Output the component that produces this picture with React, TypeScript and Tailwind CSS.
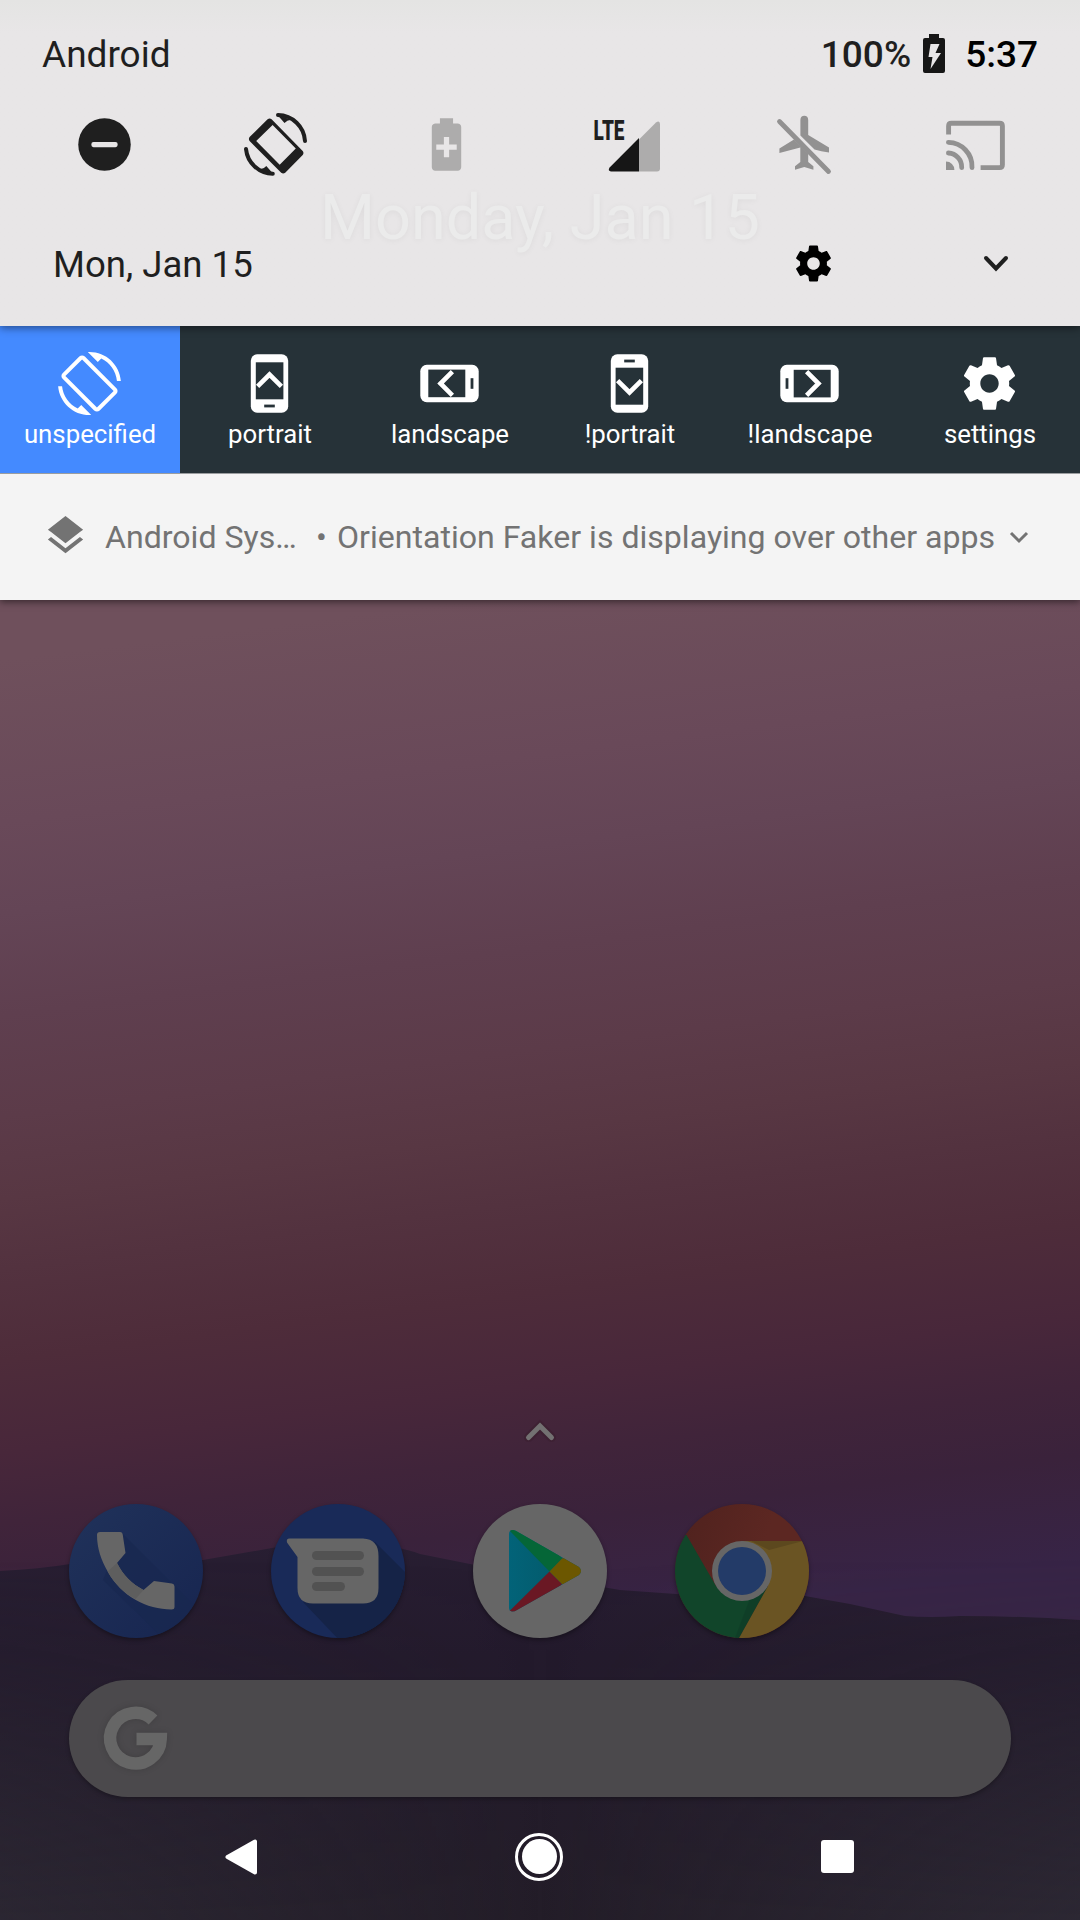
import React from "react";

type IconProps = { className?: string };

function DndIcon({ className }: IconProps) {
  return (
    <svg viewBox="0 0 24 24" className={className} fill="#1f1f1f">
      <circle cx="12" cy="12" r="10" />
      <rect x="7" y="11" width="10" height="2" rx="0.8" fill="#e7e5e6" />
    </svg>
  );
}

function AutoRotateIcon({ className }: IconProps) {
  return (
    <svg viewBox="0 0 63 63" className={className}>
      <path
        fillRule="evenodd"
        d="M4.600 23.200 L22.800 5 Q25.200 3 27.600 5 L60.300 37.700 Q62 39.800 60.300 42 L41.500 60.300 Q39.500 62 37.400 60.300 L4.600 27.600 Q2.800 25.400 4.600 23.200 Z M11 28.600 L36 53.800 L53 36.600 L28.200 11.500 Z"
        fill="#1f1f1f"
        fillOpacity="0"
      />
      <path
        fillRule="evenodd"
        d="M5.600 24 L23.600 6.200 Q25.600 4.600 27.600 6.200 L58.700 37.900 Q60.200 39.900 58.700 41.900 L41.200 59.700 Q39.200 61.200 37.200 59.700 L5.600 28 Q4.200 26 5.600 24 Z M12.200 28 L35.700 51.800 L51.800 35.600 L28.600 12 Z"
        fill="#1f1f1f"
      />
      <path d="M34 2 A27.500 27.500 0 0 1 61 28 M28.800 60.800 A27.500 27.500 0 0 1 2 36" fill="none" stroke="#1f1f1f" strokeWidth="4" strokeLinecap="round" />
      <path d="M33 1.500 L40.500 10 Q43 7 47 6.800 Z M29.800 61.500 L22.300 53 Q20 56 16 56.200 Z" fill="#1f1f1f" />
    </svg>
  );
}

function BatterySaverIcon({ className }: IconProps) {
  return (
    <svg viewBox="0 0 24 24" className={className} fill="#adacac">
      <path d="M16.200 4H14.500V2h-5v2H7.800C7.100 4 6.400 4.600 6.400 5.300v15.400c0 .7.6 1.300 1.300 1.300h8.600c.7 0 1.300-.6 1.300-1.300V5.300C17.600 4.600 17 4 16.200 4zM15.900 14h-2.900v2.900h-2V14H8.100v-2H11V9.100h2V12h2.900v2z" />
    </svg>
  );
}

function MobileSignalIcon({ className }: IconProps) {
  return (
    <svg viewBox="0 0 78 63" className={className}>
      <path d="M52 26.500 L69 9.500 Q72.500 7 73 11 V55.500 Q73 58.500 70 58.500 H52 Z" fill="#adacac" />
      <path d="M52 25 V58.500 H24 Q20.600 58 22.400 54.800 Z" fill="#161616" />
      <text x="6.500" y="27" fontFamily="Roboto" fontWeight="900" fontSize="28" fill="#1f1f1f" textLength="31" lengthAdjust="spacingAndGlyphs">LTE</text>
    </svg>
  );
}

function AirplaneOffIcon({ className }: IconProps) {
  return (
    <svg viewBox="0 0 63 63" className={className} fill="#929191">
      <path d="M27.400 24 V7 Q27.600 2.800 31.300 2.800 Q35 2.800 35.200 7 V22 L56 34.500 V39.600 Q48 38.400 41.500 36.400 L27.400 22.400 Z M21 26.400 L6.400 35.400 V40 L27.300 34.600 V49 L22 53.200 V56.800 L31.300 54 L40.400 56.800 V53.200 L35.200 49 V40.500 Z" />
      <path d="M6.500 8.500 L55.500 58.500" fill="none" stroke="#929191" strokeWidth="4.800" strokeLinecap="round" />
    </svg>
  );
}

function CastIcon({ className }: IconProps) {
  return (
    <svg viewBox="0 0 63 63" className={className} fill="none" stroke="#929191">
      <path d="M4.600 21.500 V13 Q4.600 10.200 7.400 10.200 H55.600 Q58.400 10.200 58.400 13 V51.800 Q58.400 54.600 55.600 54.600 H36.600" strokeWidth="4.900" />
      <path d="M4.400 29.400 A24 24 0 0 1 28 54.600 M4.400 40 A14 14 0 0 1 17.700 54.600" strokeWidth="4.800" strokeLinecap="round" />
      <path d="M2 48.600 A8.400 8.400 0 0 1 10.400 57 H2 Z" fill="#929191" stroke="none" />
    </svg>
  );
}

function GearIcon({ className }: IconProps) {
  return (
    <svg viewBox="0 0 24 24" className={className} fill="currentColor">
      <path d="M19.43 12.98c.04-.32.07-.64.07-.98s-.03-.66-.07-.98l2.11-1.65c.19-.15.24-.42.12-.64l-2-3.46c-.12-.22-.39-.3-.61-.22l-2.49 1c-.52-.4-1.08-.73-1.69-.98l-.38-2.65C14.46 2.18 14.25 2 14 2h-4c-.25 0-.46.18-.49.42l-.38 2.65c-.61.25-1.17.59-1.69.98l-2.49-1c-.23-.09-.49 0-.61.22l-2 3.46c-.13.22-.07.49.12.64l2.11 1.65c-.04.32-.07.65-.07.98s.03.66.07.98l-2.11 1.65c-.19.15-.24.42-.12.64l2 3.46c.12.22.39.3.61.22l2.49-1c.52.4 1.08.73 1.69.98l.38 2.65c.03.24.24.42.49.42h4c.25 0 .46-.18.49-.42l.38-2.65c.61-.25 1.17-.59 1.69-.98l2.49 1c.23.09.49 0 .61-.22l2-3.46c.12-.22.07-.49-.12-.64l-2.11-1.65zM12 15.500c-1.930 0-3.500-1.570-3.500-3.500s1.570-3.500 3.500-3.500 3.500 1.570 3.500 3.500-1.570 3.500-3.500 3.500z" />
    </svg>
  );
}

function ScreenRotationIcon() {
  return (
    <svg viewBox="0 0 24 24" className="size-[63px]" fill="#fff">
      <path d="M16.48 2.52c3.27 1.55 5.61 4.72 5.97 8.48h1.5C23.44 4.84 18.29 0 12 0l-.66.03 3.81 3.81 1.33-1.32zm-6.25-.77c-.59-.59-1.54-.59-2.12 0L1.75 8.11c-.59.59-.59 1.54 0 2.12l12.02 12.02c.59.59 1.54.59 2.12 0l6.36-6.36c.59-.59.59-1.54 0-2.12L10.23 1.75zm4.6 19.44L2.81 9.17l6.36-6.36 12.02 12.02-6.36 6.36zm-7.31.29C4.25 19.94 1.91 16.76 1.55 13H.05C.56 19.16 5.71 24 12 24l.66-.03-3.81-3.81-1.33 1.32z" />
    </svg>
  );
}

/* Phone outline with a chevron; the rotation class picks the orientation. */
function PhoneIcon({ className }: IconProps) {
  return (
    <svg viewBox="0 0 63 63" className={className}>
      <rect x="12.800" y="2.300" width="37.400" height="58.400" rx="6.500" fill="#fff" />
      <rect x="17.800" y="10.300" width="27.600" height="37" fill="#263238" />
      <rect x="26.200" y="52.600" width="10.600" height="2.800" fill="#263238" />
      <path d="M19.600 34.400 L31.500 22.500 L43.400 34.400" fill="none" stroke="#fff" strokeWidth="4.600" />
    </svg>
  );
}

const tiles = [
  { label: "unspecified", active: true, icon: <ScreenRotationIcon /> },
  { label: "portrait", active: false, icon: <PhoneIcon className="size-[63px]" /> },
  { label: "landscape", active: false, icon: <PhoneIcon className="size-[63px] -rotate-90" /> },
  { label: "!portrait", active: false, icon: <PhoneIcon className="size-[63px] rotate-180" /> },
  { label: "!landscape", active: false, icon: <PhoneIcon className="size-[63px] rotate-90" /> },
  { label: "settings", active: false, icon: <GearIcon className="size-[63px] text-white" /> },
];

function Wallpaper() {
  return (
    <svg viewBox="0 0 1080 1920" className="absolute inset-0 h-[1920px] w-[1080px]">
      <defs>
        <linearGradient id="sky" gradientUnits="userSpaceOnUse" x1="470" y1="600" x2="600" y2="1620">
          <stop offset="0" stopColor="#6f505c" />
          <stop offset="0.157" stopColor="#694959" />
          <stop offset="0.245" stopColor="#644556" />
          <stop offset="0.343" stopColor="#5f3f4f" />
          <stop offset="0.441" stopColor="#5c3b49" />
          <stop offset="0.52" stopColor="#583743" />
          <stop offset="0.588" stopColor="#53323f" />
          <stop offset="0.676" stopColor="#4e2c3a" />
          <stop offset="0.765" stopColor="#48273a" />
          <stop offset="0.833" stopColor="#40243a" />
          <stop offset="0.9" stopColor="#3a223b" />
          <stop offset="1" stopColor="#372446" />
        </linearGradient>
        <linearGradient id="hill" gradientUnits="userSpaceOnUse" x1="0" y1="1540" x2="0" y2="1920">
          <stop offset="0" stopColor="#281e32" />
          <stop offset="0.3" stopColor="#231a2c" />
          <stop offset="1" stopColor="#231d28" />
        </linearGradient>
        <linearGradient id="edge" x1="0" y1="0" x2="1" y2="0">
          <stop offset="0" stopColor="#33303c" stopOpacity="0.5" />
          <stop offset="0.5" stopColor="#33303c" stopOpacity="0" />
          <stop offset="1" stopColor="#33303c" stopOpacity="0.55" />
        </linearGradient>
        <linearGradient id="fade" x1="0" y1="0" x2="0" y2="1">
          <stop offset="0" stopColor="#000" />
          <stop offset="1" stopColor="#fff" />
        </linearGradient>
        <mask id="fadeMask">
          <rect y="1560" width="1080" height="360" fill="url(#fade)" />
        </mask>
      </defs>
      <rect width="1080" height="1920" fill="url(#sky)" />
      <path d="M0 1571 Q40 1569 70 1564 C120 1562 160 1562 203 1560 L272 1548 Q300 1542 350 1542 Q400 1546 420 1554 L480 1566 L620 1590 L690 1595 L805 1596 L850 1604 L905 1616 Q930 1618 960 1616 Q1020 1616 1080 1620 V1920 H0 Z" fill="url(#hill)" />
      <rect y="1560" width="1080" height="360" fill="url(#edge)" mask="url(#fadeMask)" />
    </svg>
  );
}

function PhoneApp() {
  return (
    <svg viewBox="0 0 134 134" className="size-[134px] drop-shadow-[0_2px_2px_rgba(0,0,0,0.35)]">
      <defs>
        <linearGradient id="pa" x1="0" y1="0" x2="1" y2="1">
          <stop offset="0" stopColor="#20325a" />
          <stop offset="1" stopColor="#172550" />
        </linearGradient>
        <clipPath id="pac"><circle cx="67" cy="67" r="67" /></clipPath>
      </defs>
      <circle cx="67" cy="67" r="67" fill="url(#pa)" />
      <g clipPath="url(#pac)">
        <path d="M53 29 L130 106 L100 140 L34 76 Z" fill="#182850" opacity="0.7" />
      </g>
      <path d="M39 68 C32 56 28 44 28 31 Q28 28 31 28 H51 Q53.5 28 53.8 31 L56.5 49 L48 59 C54 71 63 80 74.500 86 L85 77 L103 79.500 Q105.500 80 105.500 82.500 V103 Q105.500 105.500 102.500 105.500 C78 105.500 52 92 39 68 Z" fill="#666" />
      <path d="M38.500 67.500 L48 59 C54 71 63 80 74.500 86 L66.500 95 C55 89 46 80 38.500 67.500 Z" fill="#5e5e5e" />
    </svg>
  );
}

function MessagesApp() {
  return (
    <svg viewBox="0 0 134 134" className="size-[134px] drop-shadow-[0_2px_2px_rgba(0,0,0,0.35)]">
      <defs>
        <clipPath id="mac"><circle cx="67" cy="67" r="67" /></clipPath>
      </defs>
      <circle cx="67" cy="67" r="67" fill="#192a58" />
      <g clipPath="url(#mac)">
        <path d="M104 38 L140 74 V140 H72 L32 98 Z" fill="#152347" />
      </g>
      <path d="M18.500 34.500 H92 Q107.500 35 107.500 52 V84 Q107.500 99.500 92 99.500 H42 Q26.500 99.500 26.500 84 V53 L16 38.500 Q15 34.500 18.500 34.500 Z" fill="#666" />
      <rect x="41" y="47" width="52" height="9" rx="4.500" fill="#525252" />
      <rect x="41" y="63" width="52" height="9" rx="4.500" fill="#525252" />
      <rect x="41" y="78" width="33" height="9" rx="4.500" fill="#525252" />
    </svg>
  );
}

function PlayApp() {
  return (
    <svg viewBox="0 0 134 134" className="size-[134px] drop-shadow-[0_2px_2px_rgba(0,0,0,0.35)]">
      <defs>
        <clipPath id="tri">
          <path d="M36 30 Q36 26 40 26 Q42 26 44 27.500 L106 63 Q110 67 106 71 L44 106 Q42 107.500 39 107.500 Q36 107 36 104 Z" />
        </clipPath>
        <linearGradient id="pc" x1="0" y1="0" x2="1" y2="0">
          <stop offset="0" stopColor="#02647a" />
          <stop offset="1" stopColor="#045462" />
        </linearGradient>
      </defs>
      <circle cx="67" cy="67" r="67" fill="#666" />
      <g clipPath="url(#tri)">
        <rect x="30" y="20" width="90" height="90" fill="url(#pc)" />
        <path d="M36 26 L76.500 67.500 L89 54.500 L60 20 Z" fill="#056637" />
        <path d="M36 107.500 L76.500 67.500 L89 80 L60 114 Z" fill="#6a1824" />
        <path d="M76.500 67.500 L89 54.500 L114 50 V90 L89 80 Z" fill="#6c5700" />
      </g>
    </svg>
  );
}

function ChromeApp() {
  return (
    <svg viewBox="0 0 134 134" className="size-[134px] drop-shadow-[0_2px_2px_rgba(0,0,0,0.35)]">
      <defs>
        <clipPath id="cc"><circle cx="67" cy="67" r="67" /></clipPath>
        <linearGradient id="cr" x1="0" y1="0.300" x2="0.600" y2="0.500">
          <stop offset="0" stopColor="#50221e" />
          <stop offset="1" stopColor="#5c2722" />
        </linearGradient>
      </defs>
      <g clipPath="url(#cc)">
        <rect width="134" height="134" fill="url(#cr)" />
        <path d="M11.500 31 L41 82 L67 97 L93 82 L64 134 H0 V31 Z" fill="#11452a" />
        <path d="M67 37 H134 V134 H64 L93 82 Z" fill="#6a5423" />
        <path d="M76 37 H128 L94 46 Z" fill="#5c481e" />
        <path d="M64 134 L93 82 L74 97 L60 134 Z" fill="#0f3a26" opacity="0.600" />
      </g>
      <circle cx="67" cy="67" r="30" fill="#666" />
      <circle cx="67" cy="67" r="24" fill="#233b68" />
    </svg>
  );
}

export default function App() {
  return (
    <div className="relative h-[1920px] w-[1080px] overflow-hidden bg-[#241c2c] font-['Roboto',sans-serif]">
      <Wallpaper />

      <div className="relative flex h-full flex-col">
        {/* Quick settings header */}
        <header className="relative z-20 flex h-[326px] flex-col bg-[#e8e6e7] bg-gradient-to-b from-[#e4e4e3] via-[#e8e6e7] via-10% to-[#e8e6e7] shadow-[0_2px_8px_rgba(0,0,0,0.45)]">
          <div className="absolute inset-x-0 top-[182px] text-center text-[63px] leading-[72px] whitespace-nowrap text-[#ebebeb] [text-shadow:0_1px_6px_rgba(0,0,0,0.05)]">
            Monday, Jan 15
          </div>
          <div className="flex h-[108px] items-center justify-between px-[42px] pt-[2px] text-[37px] text-[#1f1f1f]">
            <span>Android</span>
            <div className="flex items-center">
              <span className="font-medium">100%</span>
              <svg viewBox="0 0 22 39" className="mb-[4px] ml-[12px] h-[39px] w-[22px]">
                <path d="M6 0 H16 V4 H20 Q22 4 22 6 V37 Q22 39 20 39 H2 Q0 39 0 37 V6 Q0 4 2 4 H6 Z" fill="#161616" />
                <path d="M7.500 10 H16.500 L12.500 19 H18 L7.500 35 L9.500 23 H5.500 Z" fill="#e8e6e7" />
              </svg>
              <span className="ml-[20px] font-medium text-black">5:37</span>
            </div>
          </div>
          <div className="flex h-[73px] items-center justify-between pr-[73px] pl-[73px]">
            <DndIcon className="size-[63px]" />
            <AutoRotateIcon className="size-[63px]" />
            <BatterySaverIcon className="size-[63px]" />
            <MobileSignalIcon className="h-[63px] w-[78px]" />
            <AirplaneOffIcon className="size-[63px]" />
            <CastIcon className="size-[63px]" />
          </div>
          <div className="flex h-[145px] items-center pt-[20px] pl-[53px]">
            <span className="flex-1 pt-[2px] text-[36.600px] leading-[43px] text-[#1f1f1f]">Mon, Jan 15</span>
            <GearIcon className="size-[43px] text-black" />
            <svg viewBox="0 0 24 15" className="mr-[72px] ml-[149px] h-[15px] w-[24px] overflow-visible" fill="none" stroke="#1f1f1f" strokeWidth="4" strokeLinecap="round">
              <path d="M2 2 L12 12.500 L22 2" />
            </svg>
          </div>
        </header>

        {/* Orientation picker notification */}
        <section className="relative z-10 grid h-[147px] grid-cols-6">
          {tiles.map((t) => (
            <div
              key={t.label}
              className={
                t.active
                  ? "flex flex-col items-center bg-[#448aff] pt-[26px] text-white"
                  : "flex flex-col items-center bg-[#263238] pt-[26px] text-white"
              }
            >
              <div className="pr-[1px]">{t.icon}</div>
              <span className="mt-[4px] text-[25.800px] leading-[31px]">{t.label}</span>
            </div>
          ))}
        </section>

        {/* System notification */}
        <section className="flex h-[127px] items-center border-t border-[#9a9d9f] bg-[#f4f4f4] pl-[42px] text-[32.100px] text-[#737373] shadow-[0_2px_7px_rgba(0,0,0,0.5)]">
          <svg viewBox="0 0 24 24" className="mb-[3px] size-[47px]" fill="#737373">
            <path d="M11.990 18.540l-7.370-5.730L3 14.070l9 7 9-7-1.630-1.270-7.380 5.740zM12 16l7.360-5.730L21 9l-9-7-9 7 1.630 1.270L12 16z" />
          </svg>
          <span className="ml-[16px] w-[211px]">Android Sys…</span>
          <span className="w-[21px]">•</span>
          <span className="whitespace-nowrap">Orientation Faker is displaying over other apps</span>
          <svg viewBox="0 0 18 11" className="ml-[15px] h-[11px] w-[18px] overflow-visible" fill="none" stroke="#737373" strokeWidth="3">
            <path d="M1 1 L9 9 L17 1" />
          </svg>
        </section>

        {/* Home screen */}
        <main className="flex flex-1 flex-col justify-end">
          <svg viewBox="0 0 28 17" className="mx-auto mb-[64px] h-[17px] w-[28px] overflow-visible" fill="none" strokeLinecap="round">
            <path d="M2.500 14.500 L14 3 L25.500 14.500" stroke="#3c2030" strokeOpacity="0.700" strokeWidth="9" />
            <path d="M2.500 14.500 L14 3 L25.500 14.500" stroke="#737172" strokeWidth="5" />
          </svg>
          <div className="grid grid-cols-5 justify-items-center px-[35px]">
            <PhoneApp />
            <MessagesApp />
            <PlayApp />
            <ChromeApp />
          </div>
          <div className="mx-[69px] mt-[42px] flex h-[117px] items-center rounded-full bg-[#4b494c] pl-[36px] shadow-[0_2px_4px_rgba(0,0,0,0.3)]">
            <svg viewBox="0 0 62 63" className="mb-[1px] h-[63px] w-[62px] overflow-visible drop-shadow-[0_0_3px_rgba(0,0,0,0.15)]" fill="none" stroke="#666" strokeWidth="12.500">
              <path d="M48 13 A25.300 25.300 0 1 0 55.700 32 H31.500" />
            </svg>
          </div>
        </main>

        <nav className="flex h-[123px] items-center pb-[4px] pl-[224px]">
          <svg viewBox="0 0 34 38" className="h-[38px] w-[34px]">
            <path d="M3.500 19 L31 3.500 V34.500 Z" fill="#fff" stroke="#fff" strokeWidth="4" strokeLinejoin="round" />
          </svg>
          <div className="ml-[257px] flex size-[48px] items-center justify-center rounded-full border-[3px] border-white">
            <div className="size-[35px] rounded-full bg-white" />
          </div>
          <div className="ml-[258px] size-[33px] rounded-[3px] bg-white" />
        </nav>
      </div>
    </div>
  );
}
